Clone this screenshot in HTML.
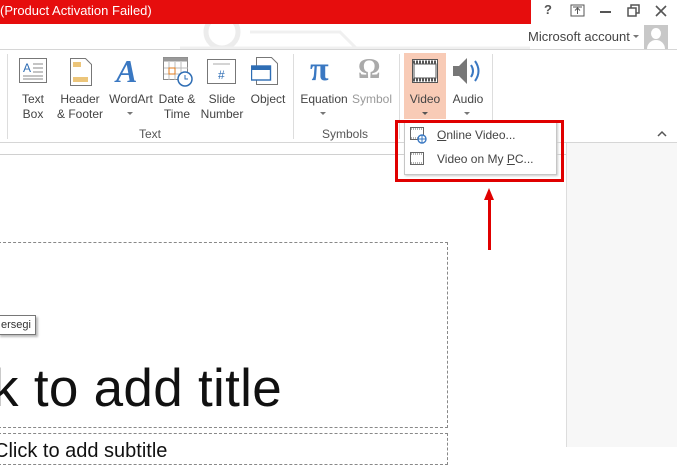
<!DOCTYPE html>
<html><head><style>
body{margin:0;width:677px;height:447px;overflow:hidden;background:#fff;font-family:"Liberation Sans",sans-serif;position:relative}
.a{position:absolute}
.lbl{position:absolute;font-size:12px;color:#444;text-align:center;line-height:15px}
</style></head><body>
<svg class="a" style="left:150px;top:24px" width="380" height="26"><circle cx="72" cy="8" r="16" fill="none" stroke="#ececec" stroke-width="5"/><path d="M100 8h90l18 18M30 24h500" stroke="#f0f0f0" stroke-width="3" fill="none"/></svg>
<div class="a" style="left:0;top:0;width:531px;height:24px;background:#e60d0d"></div>
<div class="a" style="left:0;top:3px;color:#fff;font-size:13px">(Product Activation Failed)</div>
<div class="a" style="left:544px;top:2px;font-size:13px;font-weight:bold;color:#555">?</div>
<svg class="a" style="left:570px;top:4px" width="16" height="14"><rect x="1" y="1" width="13" height="11" fill="none" stroke="#555"/><path d="M7.5 10V4M5 6.5l2.5-2.5 2.5 2.5M3 3h9" stroke="#555" fill="none"/></svg>
<div class="a" style="left:600px;top:11px;width:11px;height:2px;background:#555"></div>
<svg class="a" style="left:627px;top:4px" width="14" height="14"><rect x="1" y="4" width="8" height="8" fill="none" stroke="#555" stroke-width="1.5"/><path d="M4 4V1h8v8H9" fill="none" stroke="#555" stroke-width="1.5"/></svg>
<svg class="a" style="left:655px;top:5px" width="12" height="12"><path d="M1 1l10 10M11 1L1 11" stroke="#555" stroke-width="1.6"/></svg>
<div class="a" style="left:528px;top:29px;font-size:13px;color:#444">Microsoft account</div>
<div class="a" style="left:633px;top:35px;border:3px solid transparent;border-top:3px solid #777"></div>
<div class="a" style="left:644px;top:25px;width:24px;height:24px;background:#c8c8c8"><div class="a" style="left:7px;top:3px;width:10px;height:11px;border-radius:50%;background:#fff"></div><div class="a" style="left:3px;top:15px;width:18px;height:9px;border-radius:9px 9px 0 0;background:#fff"></div></div>
<div class="a" style="left:0;top:49px;width:677px;height:1px;background:#d6d6d6"></div>
<div class="a" style="left:7px;top:54px;width:1px;height:85px;background:#ddd"></div>
<div class="a" style="left:293px;top:54px;width:1px;height:85px;background:#ddd"></div>
<div class="a" style="left:399px;top:54px;width:1px;height:85px;background:#ddd"></div>
<div class="a" style="left:492px;top:54px;width:1px;height:70px;background:#ddd"></div>
<div class="a" style="left:404px;top:53px;width:42px;height:66px;background:#f8cbb6"></div>
<svg class="a" style="left:19px;top:58px" width="28" height="26"><rect x="0.5" y="0.5" width="27" height="24" fill="#fff" stroke="#777"/><text x="4" y="14" font-size="12" fill="#2e6db4" font-family="Liberation Sans">A</text><path d="M14 6h10M14 10h10M14 14h10M4 18h20M4 21h20" stroke="#888"/></svg>
<svg class="a" style="left:70px;top:58px" width="22" height="28"><path d="M0.5 0.5h15l6 6v21H0.5z" fill="#fff" stroke="#777"/><rect x="3" y="4" width="8" height="5" fill="#ecc57a"/><rect x="3" y="19" width="15" height="5" fill="#ecc57a"/></svg>
<div class="a" style="left:116px;top:53px;font-size:32px;font-style:italic;font-weight:bold;color:#3a78c2;font-family:'Liberation Serif',serif">A</div>
<svg class="a" style="left:163px;top:57px" width="30" height="30"><rect x="0.5" y="0.5" width="24" height="22" fill="#fff" stroke="#888"/><rect x="0.5" y="0.5" width="24" height="4" fill="#999"/><path d="M6 5v18M12 5v18M18 5v18M1 11h24M1 17h24" stroke="#bbb"/><rect x="6" y="11" width="6" height="6" fill="none" stroke="#e07b1d"/><circle cx="22" cy="22" r="7" fill="#fff" stroke="#2e6db4" stroke-width="1.5"/><path d="M22 18v4h3" stroke="#2e6db4" fill="none"/></svg>
<svg class="a" style="left:207px;top:59px" width="30" height="26"><rect x="0.5" y="0.5" width="28" height="24" fill="#fff" stroke="#777"/><path d="M6 5h17" stroke="#aaa"/><text x="11" y="20" font-size="12" fill="#2e6db4">#</text></svg>
<svg class="a" style="left:251px;top:57px" width="28" height="30"><path d="M5.5 0.5h15l6 6v21h-21z" fill="#fff" stroke="#777"/><rect x="0.5" y="9" width="19" height="14" fill="#fff" stroke="#2e6db4" stroke-width="1.4"/><rect x="0.5" y="9" width="19" height="4" fill="#2e6db4"/></svg>
<div class="a" style="left:310px;top:51px;font-size:34px;font-weight:bold;color:#3a78c2;font-family:'Liberation Serif',serif">π</div>
<div class="a" style="left:358px;top:54px;font-size:28px;font-weight:bold;color:#aaa;font-family:'Liberation Serif',serif">Ω</div>
<svg class="a" style="left:412px;top:59px" width="26" height="24"><rect x="0.5" y="0.5" width="25" height="23" fill="#fff" stroke="#555"/><path d="M1 3h24M1 21h24" stroke="#555" stroke-width="3" stroke-dasharray="2 1"/><rect x="2" y="5" width="22" height="14" fill="#fff" stroke="#555"/></svg>
<svg class="a" style="left:452px;top:57px" width="30" height="28"><path d="M1 9h6l8-8v26l-8-8H1z" fill="#777"/><path d="M19 8q4 6 0 12M23 4q7 10 0 20" stroke="#3a78c2" stroke-width="2" fill="none"/></svg>
<div class="lbl" style="left:14px;top:92px;width:38px">Text<br>Box</div>
<div class="lbl" style="left:52px;top:92px;width:56px">Header<br>&amp; Footer</div>
<div class="lbl" style="left:106px;top:92px;width:50px">WordArt</div>
<div class="lbl" style="left:155px;top:92px;width:44px">Date &amp;<br>Time</div>
<div class="lbl" style="left:198px;top:92px;width:48px">Slide<br>Number</div>
<div class="lbl" style="left:246px;top:92px;width:44px">Object</div>
<div class="lbl" style="left:298px;top:92px;width:52px">Equation</div>
<div class="lbl" style="left:350px;top:92px;width:44px;color:#999">Symbol</div>
<div class="lbl" style="left:404px;top:92px;width:42px">Video</div>
<div class="lbl" style="left:447px;top:92px;width:42px">Audio</div>
<div class="a" style="left:127px;top:112px;border:3px solid transparent;border-top:3px solid #777"></div>
<div class="a" style="left:320px;top:112px;border:3px solid transparent;border-top:3px solid #777"></div>
<div class="a" style="left:422px;top:112px;border:3px solid transparent;border-top:3px solid #555"></div>
<div class="a" style="left:464px;top:112px;border:3px solid transparent;border-top:3px solid #777"></div>
<div class="lbl" style="left:130px;top:127px;width:40px;color:#555">Text</div>
<div class="lbl" style="left:320px;top:127px;width:50px;color:#555">Symbols</div>
<svg class="a" style="left:657px;top:130px" width="10" height="7"><path d="M1 6l4-4 4 4" stroke="#555" stroke-width="1.5" fill="none"/></svg>
<div class="a" style="left:0;top:142px;width:677px;height:1px;background:#d6d6d6"></div>
<div class="a" style="left:0;top:143px;width:677px;height:304px;background:#fff"></div>
<div class="a" style="left:566px;top:143px;width:111px;height:304px;background:#f7f7f7;border-left:1px solid #ddd"></div>
<div class="a" style="left:0;top:154px;width:566px;height:1px;background:#d0d0d0"></div>
<div class="a" style="left:-2px;top:242px;width:448px;height:184px;border:1px dashed #888"></div>
<div class="a" style="left:-2px;top:433px;width:448px;height:30px;border:1px dashed #888"></div>
<div class="a" style="left:-8px;top:358px;font-size:53px;color:#111;white-space:nowrap;letter-spacing:0.3px">k to add title</div>
<div class="a" style="left:-6px;top:440px;font-size:20px;color:#111;white-space:nowrap">Click to add subtitle</div>
<div class="a" style="left:-2px;top:315px;width:34px;height:18px;border:1px solid #777;background:#fff;box-shadow:2px 2px 2px #bbb;font-size:11px;color:#333;line-height:18px;padding-left:2px">ersegi</div>
<div class="a" style="left:404px;top:121px;width:151px;height:52px;background:#fff;border:1px solid #c6c6c6;box-shadow:1px 1px 2px #ccc"></div>
<svg class="a" style="left:410px;top:127px" width="18" height="17"><rect x="0.5" y="0.5" width="13" height="12" fill="#fff" stroke="#666"/><path d="M1 2h12M1 11h12" stroke="#666" stroke-dasharray="1 1"/><circle cx="12" cy="12" r="4" fill="#fff" stroke="#3a78c2" stroke-width="1.4"/><path d="M8 12h8M12 8v8" stroke="#3a78c2"/></svg>
<svg class="a" style="left:410px;top:152px" width="16" height="14"><rect x="0.5" y="0.5" width="13" height="12" fill="#fff" stroke="#666"/><path d="M1 2h12M1 11h12" stroke="#666" stroke-dasharray="1 1"/></svg>
<div class="a" style="left:437px;top:128px;font-size:12px;color:#444"><u>O</u>nline Video...</div>
<div class="a" style="left:437px;top:152px;font-size:12px;color:#444">Video on My <u>P</u>C...</div>
<div class="a" style="box-sizing:border-box;width:169px;height:62px;left:395px;top:120px;border:3px solid #e00000"></div>
<div class="a" style="left:488px;top:196px;width:3px;height:54px;background:#e00000"></div>
<div class="a" style="left:484px;top:188px;border-left:5px solid transparent;border-right:5px solid transparent;border-bottom:12px solid #e00000"></div>
</body></html>
